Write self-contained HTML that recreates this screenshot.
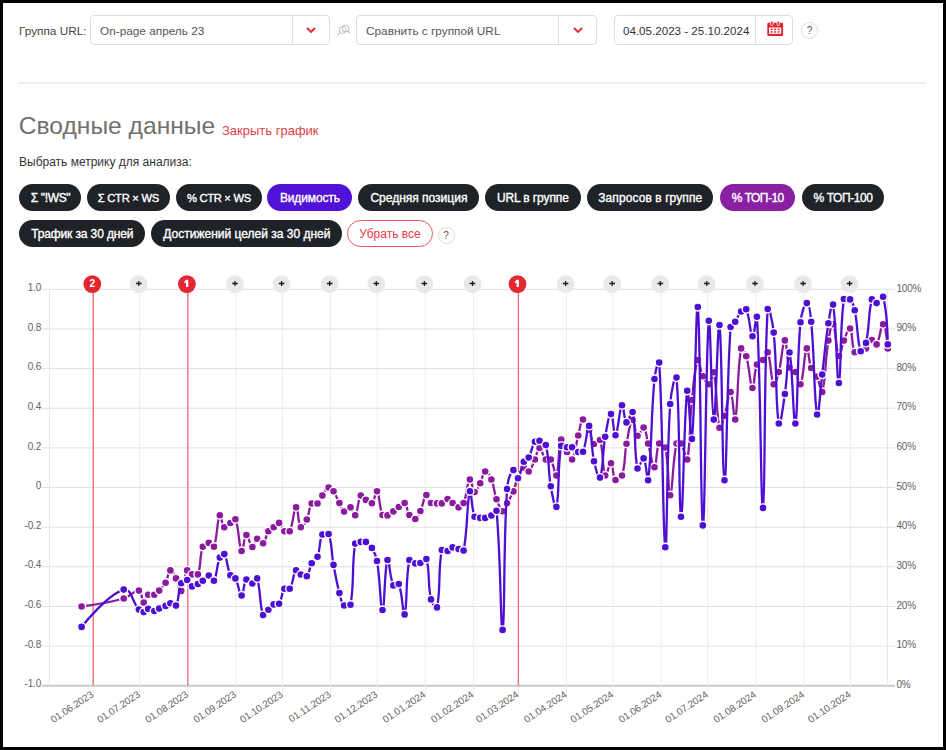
<!DOCTYPE html>
<html><head><meta charset="utf-8">
<style>
html,body{margin:0;padding:0;}
body{width:946px;height:750px;position:relative;overflow:hidden;background:#000;font-family:"Liberation Sans",sans-serif;}
#page{position:absolute;left:3px;top:3px;width:940px;height:744px;background:#fff;}
.abs{position:absolute;white-space:nowrap;}
.sel{position:absolute;top:15px;height:30px;border:1px solid #dcdcdc;border-radius:4px;background:#fff;box-sizing:border-box;}
.sel .div{position:absolute;top:0;bottom:0;width:1px;background:#dcdcdc;}
.sel .txt{position:absolute;top:8px;font-size:11.8px;color:#555;white-space:nowrap;}
.btn{position:absolute;height:27.5px;border-radius:14px;box-sizing:border-box;font-size:12px;font-weight:normal;-webkit-text-stroke:0.35px currentColor;line-height:29px;text-align:center;white-space:nowrap;}
svg text{font-family:"Liberation Sans",sans-serif;}
</style></head><body>
<div id="page"></div>
<div class="abs" style="left:19px;top:24px;font-size:11.8px;color:#444;">Группа URL:</div>
<div class="sel" style="left:90px;width:240px;">
  <div class="txt" style="left:9px;">On-page апрель 23</div>
  <div class="div" style="left:201px;"></div>
  <svg style="position:absolute;left:215px;top:11px" width="10" height="7"><path d="M1,1 L5,5 L9,1" fill="none" stroke="#e3262f" stroke-width="1.8"/></svg>
</div>
<svg style="position:absolute;left:336px;top:22px" width="16" height="16" viewBox="0 0 16 16"><circle cx="6.6" cy="8" r="3.3" fill="none" stroke="#c4c4c4" stroke-width="1.1"/><circle cx="9.6" cy="6.5" r="3.3" fill="none" stroke="#c4c4c4" stroke-width="1.1"/><path d="M4.2,10.5 L1.5,13.3 M12,9 L14,11.3" stroke="#c4c4c4" stroke-width="1.2"/></svg>
<div class="sel" style="left:356px;width:241px;">
  <div class="txt" style="left:9px;">Сравнить с группой URL</div>
  <div class="div" style="left:201px;"></div>
  <svg style="position:absolute;left:216px;top:11px" width="10" height="7"><path d="M1,1 L5,5 L9,1" fill="none" stroke="#e3262f" stroke-width="1.8"/></svg>
</div>
<div class="sel" style="left:614px;width:179px;">
  <div class="txt" style="left:8px;top:7.5px;color:#333;font-size:11.6px;">04.05.2023 - 25.10.2024</div>
  <div class="div" style="left:140px;"></div>
  <svg style="position:absolute;left:152px;top:5px" width="17" height="16" viewBox="0 0 17 16"><rect x="0.3" y="1.8" width="15.8" height="13.2" rx="1.2" fill="#e3262f"/><rect x="2" y="6.5" width="12.2" height="6.3" fill="#fff"/><g fill="#e3262f"><rect x="3.6" y="7.6" width="2" height="1.5"/><rect x="7.1" y="7.6" width="2" height="1.5"/><rect x="10.6" y="7.6" width="2" height="1.5"/><rect x="3.6" y="10.2" width="2" height="1.5"/><rect x="7.1" y="10.2" width="2" height="1.5"/><rect x="10.6" y="10.2" width="2" height="1.5"/></g><rect x="3.6" y="0" width="2.4" height="4.5" rx="1" fill="#e3262f" stroke="#fff" stroke-width="0.8"/><rect x="10" y="0" width="2.4" height="4.5" rx="1" fill="#e3262f" stroke="#fff" stroke-width="0.8"/></svg>
</div>
<div class="abs" style="left:801px;top:22px;width:15px;height:15px;border:1px solid #ddd;border-radius:50%;font-size:10px;line-height:15px;text-align:center;color:#555;">?</div>
<div class="abs" style="left:19px;top:82px;width:907px;height:2px;background:#ededed;"></div>
<div class="abs" style="left:18.8px;top:112.4px;font-size:24.6px;color:#707070;">Сводные данные</div>
<div class="abs" style="left:222px;top:123.4px;font-size:13px;color:#e5404a;">Закрыть график</div>
<div class="abs" style="left:19px;top:155.3px;font-size:12px;color:#333;">Выбрать метрику для анализа:</div>
<div class="btn" style="left:19.2px;top:183.7px;width:62.2px;background:#1f2328;color:#fff;font-size:12px;letter-spacing:-0.35px;text-indent:0.35px;">&Sigma; "!WS"</div>
<div class="btn" style="left:86.6px;top:183.7px;width:83.3px;background:#1f2328;color:#fff;font-size:11.2px;letter-spacing:-0.25px;text-indent:0.25px;">&Sigma; CTR &times; WS</div>
<div class="btn" style="left:175.7px;top:183.7px;width:86.2px;background:#1f2328;color:#fff;font-size:11.2px;letter-spacing:-0.3px;text-indent:0.3px;">% CTR &times; WS</div>
<div class="btn" style="left:267.2px;top:183.7px;width:85.3px;background:#5012d6;color:#fff;font-size:12px;letter-spacing:-0.12px;text-indent:0.12px;">Видимость</div>
<div class="btn" style="left:358.4px;top:183.7px;width:121.0px;background:#1f2328;color:#fff;font-size:12px;letter-spacing:0px;text-indent:0px;">Средняя позиция</div>
<div class="btn" style="left:484.7px;top:183.7px;width:96.2px;background:#1f2328;color:#fff;font-size:12px;letter-spacing:-0.12px;text-indent:0.12px;">URL в группе</div>
<div class="btn" style="left:587.3px;top:183.7px;width:126.0px;background:#1f2328;color:#fff;font-size:12px;letter-spacing:0.08px;text-indent:-0.08px;">Запросов в группе</div>
<div class="btn" style="left:719.6px;top:183.7px;width:75.7px;background:#8a1fa3;color:#fff;font-size:12px;letter-spacing:-0.5px;text-indent:0.5px;">% ТОП-10</div>
<div class="btn" style="left:801.6px;top:183.7px;width:82.4px;background:#1f2328;color:#fff;font-size:12px;letter-spacing:-0.42px;text-indent:0.42px;">% ТОП-100</div>
<div class="btn" style="left:19.2px;top:219.9px;width:126.1px;background:#1f2328;color:#fff;font-size:12px;letter-spacing:-0.12px;text-indent:0.12px;">Трафик за 30 дней</div>
<div class="btn" style="left:151.4px;top:219.9px;width:191.1px;background:#1f2328;color:#fff;font-size:12px;letter-spacing:0px;text-indent:0px;">Достижений целей за 30 дней</div>
<div class="btn" style="left:347px;top:219.9px;width:86px;border:1px solid #e8555e;color:#e5404a;font-weight:normal;font-size:12px;-webkit-text-stroke:0;line-height:27px;background:#fff;">Убрать все</div>
<div class="abs" style="left:437.5px;top:226.5px;width:15px;height:15px;border:1px solid #ddd;border-radius:50%;font-size:10px;line-height:15px;text-align:center;color:#555;">?</div>
<svg style="position:absolute;left:0;top:0" width="946" height="750">
<line x1="42" y1="289.3" x2="895" y2="289.3" stroke="#e0e0e0" stroke-width="1"/>
<line x1="42" y1="328.9" x2="895" y2="328.9" stroke="#e0e0e0" stroke-width="1"/>
<line x1="42" y1="368.6" x2="895" y2="368.6" stroke="#e0e0e0" stroke-width="1"/>
<line x1="42" y1="408.2" x2="895" y2="408.2" stroke="#e0e0e0" stroke-width="1"/>
<line x1="42" y1="447.9" x2="895" y2="447.9" stroke="#e0e0e0" stroke-width="1"/>
<line x1="42" y1="487.5" x2="895" y2="487.5" stroke="#e0e0e0" stroke-width="1"/>
<line x1="42" y1="527.2" x2="895" y2="527.2" stroke="#e0e0e0" stroke-width="1"/>
<line x1="42" y1="566.8" x2="895" y2="566.8" stroke="#e0e0e0" stroke-width="1"/>
<line x1="42" y1="606.5" x2="895" y2="606.5" stroke="#e0e0e0" stroke-width="1"/>
<line x1="42" y1="646.1" x2="895" y2="646.1" stroke="#e0e0e0" stroke-width="1"/>
<line x1="42" y1="685.8" x2="895" y2="685.8" stroke="#c9c9c9" stroke-width="2"/>
<line x1="49.4" y1="289.3" x2="49.4" y2="685.8" stroke="#e6e6e6" stroke-width="1"/>
<line x1="887.5" y1="289.3" x2="887.5" y2="685.8" stroke="#e6e6e6" stroke-width="1"/>
<line x1="93.2" y1="289.3" x2="93.2" y2="696.8" stroke="#ececec" stroke-width="1"/>
<line x1="139.7" y1="289.3" x2="139.7" y2="696.8" stroke="#ececec" stroke-width="1"/>
<line x1="187.8" y1="289.3" x2="187.8" y2="696.8" stroke="#ececec" stroke-width="1"/>
<line x1="235.9" y1="289.3" x2="235.9" y2="696.8" stroke="#ececec" stroke-width="1"/>
<line x1="282.5" y1="289.3" x2="282.5" y2="696.8" stroke="#ececec" stroke-width="1"/>
<line x1="330.6" y1="289.3" x2="330.6" y2="696.8" stroke="#ececec" stroke-width="1"/>
<line x1="377.2" y1="289.3" x2="377.2" y2="696.8" stroke="#ececec" stroke-width="1"/>
<line x1="425.3" y1="289.3" x2="425.3" y2="696.8" stroke="#ececec" stroke-width="1"/>
<line x1="473.4" y1="289.3" x2="473.4" y2="696.8" stroke="#ececec" stroke-width="1"/>
<line x1="518.4" y1="289.3" x2="518.4" y2="696.8" stroke="#ececec" stroke-width="1"/>
<line x1="566.5" y1="289.3" x2="566.5" y2="696.8" stroke="#ececec" stroke-width="1"/>
<line x1="613.1" y1="289.3" x2="613.1" y2="696.8" stroke="#ececec" stroke-width="1"/>
<line x1="661.2" y1="289.3" x2="661.2" y2="696.8" stroke="#ececec" stroke-width="1"/>
<line x1="707.7" y1="289.3" x2="707.7" y2="696.8" stroke="#ececec" stroke-width="1"/>
<line x1="755.9" y1="289.3" x2="755.9" y2="696.8" stroke="#ececec" stroke-width="1"/>
<line x1="804.0" y1="289.3" x2="804.0" y2="696.8" stroke="#ececec" stroke-width="1"/>
<line x1="850.5" y1="289.3" x2="850.5" y2="696.8" stroke="#ececec" stroke-width="1"/>
<text x="41" y="290.9" text-anchor="end" font-size="10" letter-spacing="-0.2" fill="#626262">1.0</text>
<text x="896.5" y="291.5" font-size="10" letter-spacing="-0.2" fill="#626262">100%</text>
<text x="41" y="330.6" text-anchor="end" font-size="10" letter-spacing="-0.2" fill="#626262">0.8</text>
<text x="896.5" y="331.1" font-size="10" letter-spacing="-0.2" fill="#626262">90%</text>
<text x="41" y="370.2" text-anchor="end" font-size="10" letter-spacing="-0.2" fill="#626262">0.6</text>
<text x="896.5" y="370.8" font-size="10" letter-spacing="-0.2" fill="#626262">80%</text>
<text x="41" y="409.9" text-anchor="end" font-size="10" letter-spacing="-0.2" fill="#626262">0.4</text>
<text x="896.5" y="410.4" font-size="10" letter-spacing="-0.2" fill="#626262">70%</text>
<text x="41" y="449.5" text-anchor="end" font-size="10" letter-spacing="-0.2" fill="#626262">0.2</text>
<text x="896.5" y="450.1" font-size="10" letter-spacing="-0.2" fill="#626262">60%</text>
<text x="41" y="489.1" text-anchor="end" font-size="10" letter-spacing="-0.2" fill="#626262">0</text>
<text x="896.5" y="489.7" font-size="10" letter-spacing="-0.2" fill="#626262">50%</text>
<text x="41" y="528.8" text-anchor="end" font-size="10" letter-spacing="-0.2" fill="#626262">-0.2</text>
<text x="896.5" y="529.4" font-size="10" letter-spacing="-0.2" fill="#626262">40%</text>
<text x="41" y="568.4" text-anchor="end" font-size="10" letter-spacing="-0.2" fill="#626262">-0.4</text>
<text x="896.5" y="569.0" font-size="10" letter-spacing="-0.2" fill="#626262">30%</text>
<text x="41" y="608.1" text-anchor="end" font-size="10" letter-spacing="-0.2" fill="#626262">-0.6</text>
<text x="896.5" y="608.7" font-size="10" letter-spacing="-0.2" fill="#626262">20%</text>
<text x="41" y="647.8" text-anchor="end" font-size="10" letter-spacing="-0.2" fill="#626262">-0.8</text>
<text x="896.5" y="648.4" font-size="10" letter-spacing="-0.2" fill="#626262">10%</text>
<text x="41" y="687.4" text-anchor="end" font-size="10" letter-spacing="-0.2" fill="#626262">-1.0</text>
<text x="896.5" y="688.0" font-size="10" letter-spacing="-0.2" fill="#626262">0%</text>
<text transform="translate(94.2,696.3) rotate(-33.5)" text-anchor="end" font-size="10" letter-spacing="-0.12" fill="#626262">01.06.2023</text>
<text transform="translate(140.7,696.3) rotate(-33.5)" text-anchor="end" font-size="10" letter-spacing="-0.12" fill="#626262">01.07.2023</text>
<text transform="translate(188.8,696.3) rotate(-33.5)" text-anchor="end" font-size="10" letter-spacing="-0.12" fill="#626262">01.08.2023</text>
<text transform="translate(236.9,696.3) rotate(-33.5)" text-anchor="end" font-size="10" letter-spacing="-0.12" fill="#626262">01.09.2023</text>
<text transform="translate(283.5,696.3) rotate(-33.5)" text-anchor="end" font-size="10" letter-spacing="-0.12" fill="#626262">01.10.2023</text>
<text transform="translate(331.6,696.3) rotate(-33.5)" text-anchor="end" font-size="10" letter-spacing="-0.12" fill="#626262">01.11.2023</text>
<text transform="translate(378.2,696.3) rotate(-33.5)" text-anchor="end" font-size="10" letter-spacing="-0.12" fill="#626262">01.12.2023</text>
<text transform="translate(426.3,696.3) rotate(-33.5)" text-anchor="end" font-size="10" letter-spacing="-0.12" fill="#626262">01.01.2024</text>
<text transform="translate(474.4,696.3) rotate(-33.5)" text-anchor="end" font-size="10" letter-spacing="-0.12" fill="#626262">01.02.2024</text>
<text transform="translate(519.4,696.3) rotate(-33.5)" text-anchor="end" font-size="10" letter-spacing="-0.12" fill="#626262">01.03.2024</text>
<text transform="translate(567.5,696.3) rotate(-33.5)" text-anchor="end" font-size="10" letter-spacing="-0.12" fill="#626262">01.04.2024</text>
<text transform="translate(614.1,696.3) rotate(-33.5)" text-anchor="end" font-size="10" letter-spacing="-0.12" fill="#626262">01.05.2024</text>
<text transform="translate(662.2,696.3) rotate(-33.5)" text-anchor="end" font-size="10" letter-spacing="-0.12" fill="#626262">01.06.2024</text>
<text transform="translate(708.7,696.3) rotate(-33.5)" text-anchor="end" font-size="10" letter-spacing="-0.12" fill="#626262">01.07.2024</text>
<text transform="translate(756.9,696.3) rotate(-33.5)" text-anchor="end" font-size="10" letter-spacing="-0.12" fill="#626262">01.08.2024</text>
<text transform="translate(805.0,696.3) rotate(-33.5)" text-anchor="end" font-size="10" letter-spacing="-0.12" fill="#626262">01.09.2024</text>
<text transform="translate(851.5,696.3) rotate(-33.5)" text-anchor="end" font-size="10" letter-spacing="-0.12" fill="#626262">01.10.2024</text>
<line x1="93.2" y1="290" x2="93.2" y2="685.8" stroke="#ee6a72" stroke-width="1.3"/>
<line x1="187.8" y1="290" x2="187.8" y2="685.8" stroke="#ee6a72" stroke-width="1.3"/>
<line x1="518.4" y1="290" x2="518.4" y2="685.8" stroke="#ee6a72" stroke-width="1.3"/>
<path d="M81.6,606.5 C81.6,606.5 106.5,603.3 123.7,598.5 C130.6,596.6 134.2,589.6 138.9,590.6 C142.5,591.3 141.4,601.6 143.7,602.6 C145.3,603.3 145.5,596.8 148.2,594.8 C150.0,593.5 152.1,595.7 154.3,594.8 C156.7,593.9 157.4,592.6 159.2,590.6 C162.1,587.5 163.6,586.4 165.6,582.7 C168.3,577.9 167.9,571.4 170.4,570.4 C172.3,569.6 174.1,574.8 176.0,578.4 C178.6,583.4 179.4,592.2 181.2,590.9 C184.1,588.8 183.7,575.8 187.2,570.4 C188.2,568.8 189.7,573.5 192.0,574.4 C194.2,575.2 197.1,576.4 197.9,574.4 C201.6,564.8 199.1,557.3 202.8,546.8 C203.7,544.1 206.3,542.9 208.8,542.9 C211.0,542.9 213.1,548.6 213.9,546.7 C217.7,537.0 216.6,521.0 219.8,515.2 C221.0,512.9 221.5,525.1 224.3,527.2 C225.9,528.4 227.9,524.8 230.4,523.0 C232.5,521.5 234.7,517.4 235.4,519.3 C239.4,529.2 238.6,546.7 241.6,551.0 C243.2,553.2 243.9,535.9 246.4,535.0 C248.4,534.3 249.7,546.1 252.4,547.0 C254.2,547.7 254.6,539.7 257.1,538.8 C259.1,538.1 261.4,544.4 263.1,543.2 C266.1,541.2 265.4,535.7 268.4,531.2 C269.9,528.9 271.5,528.9 273.7,527.2 C276.0,525.4 277.2,522.2 279.1,522.9 C281.7,523.9 281.5,528.9 284.4,531.2 C286.0,532.4 288.8,533.0 289.7,531.2 C293.7,522.9 293.5,508.2 296.1,507.3 C298.2,506.5 297.8,523.7 300.8,527.2 C302.3,528.9 305.1,523.2 306.8,519.5 C309.7,513.2 308.4,508.5 311.7,503.5 C312.9,501.8 315.8,504.8 317.5,503.5 C320.3,501.5 320.2,498.8 322.4,495.6 C324.8,492.1 325.7,488.6 328.6,487.5 C330.4,486.8 332.0,489.2 333.5,491.3 C336.6,495.8 336.8,498.2 339.4,503.1 C341.3,506.7 341.5,510.6 344.1,511.6 C346.2,512.4 348.4,506.6 350.5,507.3 C353.0,508.1 353.9,516.7 355.2,515.2 C358.2,511.8 357.4,500.4 360.8,495.6 C361.9,494.0 363.6,498.3 365.9,499.9 C368.3,501.5 370.3,504.6 371.9,503.3 C375.0,500.9 375.4,489.5 377.0,491.2 C379.9,494.4 378.8,506.6 382.5,515.0 C383.3,516.7 385.6,516.0 387.5,515.4 C390.2,514.5 391.0,513.2 393.4,511.4 C395.7,509.7 396.5,508.8 398.8,507.0 C401.2,505.2 403.0,501.8 404.6,503.0 C407.5,505.2 406.5,510.7 409.4,515.0 C411.0,517.4 413.3,519.7 415.3,519.0 C417.9,518.0 418.7,514.6 420.4,511.0 C423.4,504.5 423.5,497.2 426.4,495.0 C428.0,493.8 428.3,500.9 431.0,503.0 C432.8,504.4 434.5,503.3 437.0,503.4 C439.0,503.5 440.0,504.1 441.8,503.4 C444.5,502.3 445.2,499.1 447.6,499.0 C449.7,498.9 450.5,501.4 452.6,503.0 C455.1,504.9 456.2,507.4 458.6,507.4 C460.8,507.4 462.6,505.6 463.6,503.1 C467.3,493.9 466.9,482.5 469.9,479.5 C471.5,477.9 472.2,491.1 474.6,492.0 C476.6,492.7 478.3,487.1 480.2,483.2 C482.7,478.5 482.6,472.4 485.2,471.5 C487.3,470.8 489.9,475.6 491.4,479.5 C494.6,487.3 493.7,491.2 496.5,499.2 C498.4,504.5 500.0,510.2 502.6,511.2 C504.5,511.9 505.3,506.6 507.1,503.2 C509.8,498.3 511.3,496.6 513.4,491.4 C515.8,485.6 515.5,482.8 518.0,477.0 C519.9,472.7 520.9,469.0 523.8,467.5 C525.4,466.7 527.2,472.6 528.7,471.5 C531.8,469.2 532.5,464.6 534.9,459.5 C537.0,454.8 537.3,448.0 539.5,448.0 C541.9,448.0 542.4,456.0 545.8,459.5 C547.1,460.8 549.7,458.0 550.8,459.5 C554.2,464.7 555.0,478.2 556.4,475.5 C559.4,469.8 558.0,446.7 561.2,439.5 C562.5,436.8 564.3,446.9 567.0,452.0 C568.8,455.3 570.8,461.4 572.1,459.5 C575.5,454.4 575.5,445.5 578.2,435.5 C580.0,428.7 580.3,420.8 583.0,419.5 C584.9,418.5 587.0,425.4 589.1,430.0 C591.7,435.7 591.0,441.2 594.0,444.0 C595.6,445.4 599.3,437.8 600.0,440.0 C603.9,451.0 601.9,468.4 605.2,475.5 C606.5,478.2 609.1,462.4 611.0,463.2 C613.4,464.3 612.3,476.5 615.5,480.0 C617.0,481.6 621.1,478.5 622.0,475.5 C625.8,463.3 624.0,456.9 626.5,443.7 C628.4,433.6 629.8,422.0 632.6,420.0 C634.5,418.6 634.7,433.8 637.5,435.7 C639.3,436.9 642.0,426.2 643.6,427.5 C646.4,429.6 646.3,436.8 648.1,443.6 C650.9,453.5 652.2,467.3 654.5,467.3 C656.8,467.3 655.7,449.9 659.2,443.5 C660.2,441.6 664.7,444.6 665.3,447.5 C669.3,466.3 668.0,496.0 670.2,495.2 C672.6,494.3 672.3,463.5 676.5,443.5 C676.8,441.7 680.1,442.1 681.0,443.5 C684.6,448.8 686.1,463.6 687.2,459.5 C690.7,445.3 689.2,424.9 691.9,400.0 C693.7,383.2 694.6,367.2 697.8,360.2 C699.2,357.3 700.0,369.9 702.8,376.3 C704.6,380.1 706.8,385.0 708.8,384.3 C711.4,383.3 712.9,368.7 713.8,372.2 C717.4,387.0 715.8,412.9 719.5,427.8 C720.3,431.2 722.8,421.1 724.5,415.9 C727.5,406.1 728.5,391.4 730.6,392.1 C733.0,392.9 733.9,424.6 735.2,419.5 C738.3,406.3 737.0,371.9 741.1,348.4 C741.6,345.3 745.2,352.5 746.2,356.2 C750.0,369.1 749.9,386.0 752.5,388.0 C754.4,389.5 753.6,373.4 756.9,364.5 C758.0,361.7 760.9,362.3 763.0,360.0 C765.4,357.2 766.7,350.0 767.7,352.2 C771.2,360.2 770.4,378.4 773.7,384.3 C775.0,386.7 777.4,377.5 778.8,372.1 C782.1,359.0 782.5,341.4 784.9,340.4 C787.0,339.5 786.0,357.0 789.5,367.5 C790.4,370.3 793.7,369.6 795.4,372.1 C798.4,376.6 799.3,387.0 800.5,384.3 C804.1,377.0 803.9,352.8 806.8,348.4 C808.4,346.0 808.3,360.2 811.2,368.0 C812.7,372.1 815.3,372.6 817.1,376.6 C819.9,382.7 821.0,395.6 822.2,392.0 C825.7,380.5 824.9,362.0 828.4,340.6 C829.5,333.5 831.6,322.0 833.1,324.2 C836.0,328.4 835.9,351.4 838.9,356.0 C840.4,358.3 841.3,346.9 843.9,340.6 C846.0,335.3 848.5,326.7 850.1,328.5 C853.0,331.6 851.1,344.5 854.7,352.2 C855.6,354.1 858.3,352.1 860.7,351.3 C863.1,350.5 864.3,350.3 866.0,348.5 C869.0,345.5 869.2,341.1 871.9,340.0 C873.6,339.3 875.5,345.9 876.6,344.4 C880.2,339.3 880.9,323.4 883.1,324.2 C885.6,325.1 887.8,348.5 887.8,348.5" fill="none" stroke="#8a1b9e" stroke-width="2.3" stroke-linejoin="round"/>
<circle cx="81.6" cy="606.5" r="4.0" fill="#8a1b9e" stroke="#fff" stroke-width="1.4"/>
<circle cx="123.7" cy="598.5" r="4.0" fill="#8a1b9e" stroke="#fff" stroke-width="1.4"/>
<circle cx="138.9" cy="590.6" r="4.0" fill="#8a1b9e" stroke="#fff" stroke-width="1.4"/>
<circle cx="143.7" cy="602.6" r="4.0" fill="#8a1b9e" stroke="#fff" stroke-width="1.4"/>
<circle cx="148.2" cy="594.8" r="4.0" fill="#8a1b9e" stroke="#fff" stroke-width="1.4"/>
<circle cx="154.3" cy="594.8" r="4.0" fill="#8a1b9e" stroke="#fff" stroke-width="1.4"/>
<circle cx="159.2" cy="590.6" r="4.0" fill="#8a1b9e" stroke="#fff" stroke-width="1.4"/>
<circle cx="165.6" cy="582.7" r="4.0" fill="#8a1b9e" stroke="#fff" stroke-width="1.4"/>
<circle cx="170.4" cy="570.4" r="4.0" fill="#8a1b9e" stroke="#fff" stroke-width="1.4"/>
<circle cx="176.0" cy="578.4" r="4.0" fill="#8a1b9e" stroke="#fff" stroke-width="1.4"/>
<circle cx="181.2" cy="590.9" r="4.0" fill="#8a1b9e" stroke="#fff" stroke-width="1.4"/>
<circle cx="187.2" cy="570.4" r="4.0" fill="#8a1b9e" stroke="#fff" stroke-width="1.4"/>
<circle cx="192.0" cy="574.4" r="4.0" fill="#8a1b9e" stroke="#fff" stroke-width="1.4"/>
<circle cx="197.9" cy="574.4" r="4.0" fill="#8a1b9e" stroke="#fff" stroke-width="1.4"/>
<circle cx="202.8" cy="546.8" r="4.0" fill="#8a1b9e" stroke="#fff" stroke-width="1.4"/>
<circle cx="208.8" cy="542.9" r="4.0" fill="#8a1b9e" stroke="#fff" stroke-width="1.4"/>
<circle cx="213.9" cy="546.7" r="4.0" fill="#8a1b9e" stroke="#fff" stroke-width="1.4"/>
<circle cx="219.8" cy="515.2" r="4.0" fill="#8a1b9e" stroke="#fff" stroke-width="1.4"/>
<circle cx="224.3" cy="527.2" r="4.0" fill="#8a1b9e" stroke="#fff" stroke-width="1.4"/>
<circle cx="230.4" cy="523.0" r="4.0" fill="#8a1b9e" stroke="#fff" stroke-width="1.4"/>
<circle cx="235.4" cy="519.3" r="4.0" fill="#8a1b9e" stroke="#fff" stroke-width="1.4"/>
<circle cx="241.6" cy="551.0" r="4.0" fill="#8a1b9e" stroke="#fff" stroke-width="1.4"/>
<circle cx="246.4" cy="535.0" r="4.0" fill="#8a1b9e" stroke="#fff" stroke-width="1.4"/>
<circle cx="252.4" cy="547.0" r="4.0" fill="#8a1b9e" stroke="#fff" stroke-width="1.4"/>
<circle cx="257.1" cy="538.8" r="4.0" fill="#8a1b9e" stroke="#fff" stroke-width="1.4"/>
<circle cx="263.1" cy="543.2" r="4.0" fill="#8a1b9e" stroke="#fff" stroke-width="1.4"/>
<circle cx="268.4" cy="531.2" r="4.0" fill="#8a1b9e" stroke="#fff" stroke-width="1.4"/>
<circle cx="273.7" cy="527.2" r="4.0" fill="#8a1b9e" stroke="#fff" stroke-width="1.4"/>
<circle cx="279.1" cy="522.9" r="4.0" fill="#8a1b9e" stroke="#fff" stroke-width="1.4"/>
<circle cx="284.4" cy="531.2" r="4.0" fill="#8a1b9e" stroke="#fff" stroke-width="1.4"/>
<circle cx="289.7" cy="531.2" r="4.0" fill="#8a1b9e" stroke="#fff" stroke-width="1.4"/>
<circle cx="296.1" cy="507.3" r="4.0" fill="#8a1b9e" stroke="#fff" stroke-width="1.4"/>
<circle cx="300.8" cy="527.2" r="4.0" fill="#8a1b9e" stroke="#fff" stroke-width="1.4"/>
<circle cx="306.8" cy="519.5" r="4.0" fill="#8a1b9e" stroke="#fff" stroke-width="1.4"/>
<circle cx="311.7" cy="503.5" r="4.0" fill="#8a1b9e" stroke="#fff" stroke-width="1.4"/>
<circle cx="317.5" cy="503.5" r="4.0" fill="#8a1b9e" stroke="#fff" stroke-width="1.4"/>
<circle cx="322.4" cy="495.6" r="4.0" fill="#8a1b9e" stroke="#fff" stroke-width="1.4"/>
<circle cx="328.6" cy="487.5" r="4.0" fill="#8a1b9e" stroke="#fff" stroke-width="1.4"/>
<circle cx="333.5" cy="491.3" r="4.0" fill="#8a1b9e" stroke="#fff" stroke-width="1.4"/>
<circle cx="339.4" cy="503.1" r="4.0" fill="#8a1b9e" stroke="#fff" stroke-width="1.4"/>
<circle cx="344.1" cy="511.6" r="4.0" fill="#8a1b9e" stroke="#fff" stroke-width="1.4"/>
<circle cx="350.5" cy="507.3" r="4.0" fill="#8a1b9e" stroke="#fff" stroke-width="1.4"/>
<circle cx="355.2" cy="515.2" r="4.0" fill="#8a1b9e" stroke="#fff" stroke-width="1.4"/>
<circle cx="360.8" cy="495.6" r="4.0" fill="#8a1b9e" stroke="#fff" stroke-width="1.4"/>
<circle cx="365.9" cy="499.9" r="4.0" fill="#8a1b9e" stroke="#fff" stroke-width="1.4"/>
<circle cx="371.9" cy="503.3" r="4.0" fill="#8a1b9e" stroke="#fff" stroke-width="1.4"/>
<circle cx="377.0" cy="491.2" r="4.0" fill="#8a1b9e" stroke="#fff" stroke-width="1.4"/>
<circle cx="382.5" cy="515.0" r="4.0" fill="#8a1b9e" stroke="#fff" stroke-width="1.4"/>
<circle cx="387.5" cy="515.4" r="4.0" fill="#8a1b9e" stroke="#fff" stroke-width="1.4"/>
<circle cx="393.4" cy="511.4" r="4.0" fill="#8a1b9e" stroke="#fff" stroke-width="1.4"/>
<circle cx="398.8" cy="507.0" r="4.0" fill="#8a1b9e" stroke="#fff" stroke-width="1.4"/>
<circle cx="404.6" cy="503.0" r="4.0" fill="#8a1b9e" stroke="#fff" stroke-width="1.4"/>
<circle cx="409.4" cy="515.0" r="4.0" fill="#8a1b9e" stroke="#fff" stroke-width="1.4"/>
<circle cx="415.3" cy="519.0" r="4.0" fill="#8a1b9e" stroke="#fff" stroke-width="1.4"/>
<circle cx="420.4" cy="511.0" r="4.0" fill="#8a1b9e" stroke="#fff" stroke-width="1.4"/>
<circle cx="426.4" cy="495.0" r="4.0" fill="#8a1b9e" stroke="#fff" stroke-width="1.4"/>
<circle cx="431.0" cy="503.0" r="4.0" fill="#8a1b9e" stroke="#fff" stroke-width="1.4"/>
<circle cx="437.0" cy="503.4" r="4.0" fill="#8a1b9e" stroke="#fff" stroke-width="1.4"/>
<circle cx="441.8" cy="503.4" r="4.0" fill="#8a1b9e" stroke="#fff" stroke-width="1.4"/>
<circle cx="447.6" cy="499.0" r="4.0" fill="#8a1b9e" stroke="#fff" stroke-width="1.4"/>
<circle cx="452.6" cy="503.0" r="4.0" fill="#8a1b9e" stroke="#fff" stroke-width="1.4"/>
<circle cx="458.6" cy="507.4" r="4.0" fill="#8a1b9e" stroke="#fff" stroke-width="1.4"/>
<circle cx="463.6" cy="503.1" r="4.0" fill="#8a1b9e" stroke="#fff" stroke-width="1.4"/>
<circle cx="469.9" cy="479.5" r="4.0" fill="#8a1b9e" stroke="#fff" stroke-width="1.4"/>
<circle cx="474.6" cy="492.0" r="4.0" fill="#8a1b9e" stroke="#fff" stroke-width="1.4"/>
<circle cx="480.2" cy="483.2" r="4.0" fill="#8a1b9e" stroke="#fff" stroke-width="1.4"/>
<circle cx="485.2" cy="471.5" r="4.0" fill="#8a1b9e" stroke="#fff" stroke-width="1.4"/>
<circle cx="491.4" cy="479.5" r="4.0" fill="#8a1b9e" stroke="#fff" stroke-width="1.4"/>
<circle cx="496.5" cy="499.2" r="4.0" fill="#8a1b9e" stroke="#fff" stroke-width="1.4"/>
<circle cx="502.6" cy="511.2" r="4.0" fill="#8a1b9e" stroke="#fff" stroke-width="1.4"/>
<circle cx="507.1" cy="503.2" r="4.0" fill="#8a1b9e" stroke="#fff" stroke-width="1.4"/>
<circle cx="513.4" cy="491.4" r="4.0" fill="#8a1b9e" stroke="#fff" stroke-width="1.4"/>
<circle cx="518.0" cy="477.0" r="4.0" fill="#8a1b9e" stroke="#fff" stroke-width="1.4"/>
<circle cx="523.8" cy="467.5" r="4.0" fill="#8a1b9e" stroke="#fff" stroke-width="1.4"/>
<circle cx="528.7" cy="471.5" r="4.0" fill="#8a1b9e" stroke="#fff" stroke-width="1.4"/>
<circle cx="534.9" cy="459.5" r="4.0" fill="#8a1b9e" stroke="#fff" stroke-width="1.4"/>
<circle cx="539.5" cy="448.0" r="4.0" fill="#8a1b9e" stroke="#fff" stroke-width="1.4"/>
<circle cx="545.8" cy="459.5" r="4.0" fill="#8a1b9e" stroke="#fff" stroke-width="1.4"/>
<circle cx="550.8" cy="459.5" r="4.0" fill="#8a1b9e" stroke="#fff" stroke-width="1.4"/>
<circle cx="556.4" cy="475.5" r="4.0" fill="#8a1b9e" stroke="#fff" stroke-width="1.4"/>
<circle cx="561.2" cy="439.5" r="4.0" fill="#8a1b9e" stroke="#fff" stroke-width="1.4"/>
<circle cx="567.0" cy="452.0" r="4.0" fill="#8a1b9e" stroke="#fff" stroke-width="1.4"/>
<circle cx="572.1" cy="459.5" r="4.0" fill="#8a1b9e" stroke="#fff" stroke-width="1.4"/>
<circle cx="578.2" cy="435.5" r="4.0" fill="#8a1b9e" stroke="#fff" stroke-width="1.4"/>
<circle cx="583.0" cy="419.5" r="4.0" fill="#8a1b9e" stroke="#fff" stroke-width="1.4"/>
<circle cx="589.1" cy="430.0" r="4.0" fill="#8a1b9e" stroke="#fff" stroke-width="1.4"/>
<circle cx="594.0" cy="444.0" r="4.0" fill="#8a1b9e" stroke="#fff" stroke-width="1.4"/>
<circle cx="600.0" cy="440.0" r="4.0" fill="#8a1b9e" stroke="#fff" stroke-width="1.4"/>
<circle cx="605.2" cy="475.5" r="4.0" fill="#8a1b9e" stroke="#fff" stroke-width="1.4"/>
<circle cx="611.0" cy="463.2" r="4.0" fill="#8a1b9e" stroke="#fff" stroke-width="1.4"/>
<circle cx="615.5" cy="480.0" r="4.0" fill="#8a1b9e" stroke="#fff" stroke-width="1.4"/>
<circle cx="622.0" cy="475.5" r="4.0" fill="#8a1b9e" stroke="#fff" stroke-width="1.4"/>
<circle cx="626.5" cy="443.7" r="4.0" fill="#8a1b9e" stroke="#fff" stroke-width="1.4"/>
<circle cx="632.6" cy="420.0" r="4.0" fill="#8a1b9e" stroke="#fff" stroke-width="1.4"/>
<circle cx="637.5" cy="435.7" r="4.0" fill="#8a1b9e" stroke="#fff" stroke-width="1.4"/>
<circle cx="643.6" cy="427.5" r="4.0" fill="#8a1b9e" stroke="#fff" stroke-width="1.4"/>
<circle cx="648.1" cy="443.6" r="4.0" fill="#8a1b9e" stroke="#fff" stroke-width="1.4"/>
<circle cx="654.5" cy="467.3" r="4.0" fill="#8a1b9e" stroke="#fff" stroke-width="1.4"/>
<circle cx="659.2" cy="443.5" r="4.0" fill="#8a1b9e" stroke="#fff" stroke-width="1.4"/>
<circle cx="665.3" cy="447.5" r="4.0" fill="#8a1b9e" stroke="#fff" stroke-width="1.4"/>
<circle cx="670.2" cy="495.2" r="4.0" fill="#8a1b9e" stroke="#fff" stroke-width="1.4"/>
<circle cx="676.5" cy="443.5" r="4.0" fill="#8a1b9e" stroke="#fff" stroke-width="1.4"/>
<circle cx="681.0" cy="443.5" r="4.0" fill="#8a1b9e" stroke="#fff" stroke-width="1.4"/>
<circle cx="687.2" cy="459.5" r="4.0" fill="#8a1b9e" stroke="#fff" stroke-width="1.4"/>
<circle cx="691.9" cy="400.0" r="4.0" fill="#8a1b9e" stroke="#fff" stroke-width="1.4"/>
<circle cx="697.8" cy="360.2" r="4.0" fill="#8a1b9e" stroke="#fff" stroke-width="1.4"/>
<circle cx="702.8" cy="376.3" r="4.0" fill="#8a1b9e" stroke="#fff" stroke-width="1.4"/>
<circle cx="708.8" cy="384.3" r="4.0" fill="#8a1b9e" stroke="#fff" stroke-width="1.4"/>
<circle cx="713.8" cy="372.2" r="4.0" fill="#8a1b9e" stroke="#fff" stroke-width="1.4"/>
<circle cx="719.5" cy="427.8" r="4.0" fill="#8a1b9e" stroke="#fff" stroke-width="1.4"/>
<circle cx="724.5" cy="415.9" r="4.0" fill="#8a1b9e" stroke="#fff" stroke-width="1.4"/>
<circle cx="730.6" cy="392.1" r="4.0" fill="#8a1b9e" stroke="#fff" stroke-width="1.4"/>
<circle cx="735.2" cy="419.5" r="4.0" fill="#8a1b9e" stroke="#fff" stroke-width="1.4"/>
<circle cx="741.1" cy="348.4" r="4.0" fill="#8a1b9e" stroke="#fff" stroke-width="1.4"/>
<circle cx="746.2" cy="356.2" r="4.0" fill="#8a1b9e" stroke="#fff" stroke-width="1.4"/>
<circle cx="752.5" cy="388.0" r="4.0" fill="#8a1b9e" stroke="#fff" stroke-width="1.4"/>
<circle cx="756.9" cy="364.5" r="4.0" fill="#8a1b9e" stroke="#fff" stroke-width="1.4"/>
<circle cx="763.0" cy="360.0" r="4.0" fill="#8a1b9e" stroke="#fff" stroke-width="1.4"/>
<circle cx="767.7" cy="352.2" r="4.0" fill="#8a1b9e" stroke="#fff" stroke-width="1.4"/>
<circle cx="773.7" cy="384.3" r="4.0" fill="#8a1b9e" stroke="#fff" stroke-width="1.4"/>
<circle cx="778.8" cy="372.1" r="4.0" fill="#8a1b9e" stroke="#fff" stroke-width="1.4"/>
<circle cx="784.9" cy="340.4" r="4.0" fill="#8a1b9e" stroke="#fff" stroke-width="1.4"/>
<circle cx="789.5" cy="367.5" r="4.0" fill="#8a1b9e" stroke="#fff" stroke-width="1.4"/>
<circle cx="795.4" cy="372.1" r="4.0" fill="#8a1b9e" stroke="#fff" stroke-width="1.4"/>
<circle cx="800.5" cy="384.3" r="4.0" fill="#8a1b9e" stroke="#fff" stroke-width="1.4"/>
<circle cx="806.8" cy="348.4" r="4.0" fill="#8a1b9e" stroke="#fff" stroke-width="1.4"/>
<circle cx="811.2" cy="368.0" r="4.0" fill="#8a1b9e" stroke="#fff" stroke-width="1.4"/>
<circle cx="817.1" cy="376.6" r="4.0" fill="#8a1b9e" stroke="#fff" stroke-width="1.4"/>
<circle cx="822.2" cy="392.0" r="4.0" fill="#8a1b9e" stroke="#fff" stroke-width="1.4"/>
<circle cx="828.4" cy="340.6" r="4.0" fill="#8a1b9e" stroke="#fff" stroke-width="1.4"/>
<circle cx="833.1" cy="324.2" r="4.0" fill="#8a1b9e" stroke="#fff" stroke-width="1.4"/>
<circle cx="838.9" cy="356.0" r="4.0" fill="#8a1b9e" stroke="#fff" stroke-width="1.4"/>
<circle cx="843.9" cy="340.6" r="4.0" fill="#8a1b9e" stroke="#fff" stroke-width="1.4"/>
<circle cx="850.1" cy="328.5" r="4.0" fill="#8a1b9e" stroke="#fff" stroke-width="1.4"/>
<circle cx="854.7" cy="352.2" r="4.0" fill="#8a1b9e" stroke="#fff" stroke-width="1.4"/>
<circle cx="860.7" cy="351.3" r="4.0" fill="#8a1b9e" stroke="#fff" stroke-width="1.4"/>
<circle cx="866.0" cy="348.5" r="4.0" fill="#8a1b9e" stroke="#fff" stroke-width="1.4"/>
<circle cx="871.9" cy="340.0" r="4.0" fill="#8a1b9e" stroke="#fff" stroke-width="1.4"/>
<circle cx="876.6" cy="344.4" r="4.0" fill="#8a1b9e" stroke="#fff" stroke-width="1.4"/>
<circle cx="883.1" cy="324.2" r="4.0" fill="#8a1b9e" stroke="#fff" stroke-width="1.4"/>
<circle cx="887.8" cy="348.5" r="4.0" fill="#8a1b9e" stroke="#fff" stroke-width="1.4"/>
<path d="M81.6,626.9 C81.6,626.9 107.1,594.6 123.7,589.6 C131.1,587.4 132.0,601.8 138.9,609.6 C140.4,611.3 141.8,612.2 143.7,612.1 C145.6,611.9 146.1,609.1 148.2,608.9 C150.6,608.7 151.8,611.1 154.3,611.0 C156.4,610.9 157.1,609.5 159.2,608.6 C161.9,607.4 163.0,607.2 165.6,605.9 C167.7,604.9 168.3,603.3 170.4,603.2 C172.7,603.1 175.0,607.4 176.0,605.6 C179.6,599.0 177.6,591.5 181.2,583.2 C182.3,580.7 185.1,579.4 187.2,580.0 C189.7,580.7 189.5,585.5 192.0,586.4 C194.0,587.1 195.5,585.2 197.9,584.0 C200.1,582.9 200.8,582.3 202.8,580.8 C205.4,578.7 206.4,575.5 208.8,575.5 C211.0,575.5 212.8,582.6 213.9,580.8 C217.4,575.0 216.2,566.6 219.8,557.6 C220.6,555.4 223.4,552.6 224.3,554.1 C227.8,560.0 226.7,567.2 230.4,575.2 C231.4,577.4 234.3,576.3 235.4,578.4 C239.0,584.8 239.2,595.3 241.6,595.5 C243.8,595.7 243.2,583.0 246.4,579.5 C247.8,578.0 250.1,583.7 252.4,583.5 C254.6,583.3 256.4,576.3 257.1,578.4 C260.9,589.6 259.2,604.2 263.1,615.1 C263.9,617.3 266.2,612.0 268.4,609.7 C270.6,607.5 271.1,605.8 273.7,604.4 C275.6,603.4 278.0,605.5 279.1,603.8 C282.4,598.9 281.1,593.5 284.4,588.8 C285.5,587.2 288.7,590.5 289.7,588.8 C293.6,582.7 292.6,574.8 296.1,570.3 C297.2,568.8 298.5,573.3 300.8,574.5 C303.0,575.7 305.4,577.7 306.8,576.2 C310.0,572.9 308.9,568.2 311.7,563.2 C313.4,560.1 316.3,560.1 317.5,556.8 C320.8,548.1 318.7,542.1 322.4,534.6 C323.4,532.5 327.8,531.9 328.6,534.0 C332.5,544.6 331.1,552.0 333.5,564.9 C335.7,576.8 336.4,581.4 339.4,593.1 C340.8,598.5 341.0,602.2 344.1,605.5 C345.6,607.1 350.1,607.3 350.5,604.8 C354.7,581.3 351.3,567.7 355.2,543.6 C355.6,541.3 358.4,542.3 360.8,541.9 C362.9,541.6 364.1,541.0 365.9,541.9 C368.8,543.5 370.1,544.9 371.9,547.9 C374.8,552.9 376.0,555.2 377.0,561.0 C380.5,581.3 380.3,610.2 382.5,610.0 C384.7,609.8 384.5,566.8 387.5,560.0 C389.1,556.5 389.5,577.1 393.4,585.4 C394.2,587.2 398.1,582.1 398.8,584.0 C402.8,594.3 403.0,618.0 404.6,614.4 C407.4,608.0 405.4,579.0 409.4,560.0 C409.9,557.6 412.7,562.7 415.3,563.4 C417.3,563.9 418.5,563.8 420.4,563.0 C423.1,561.9 425.7,556.7 426.4,559.0 C430.2,572.0 427.4,583.1 431.0,599.4 C431.9,603.4 436.3,610.5 437.0,607.4 C440.9,589.7 437.8,571.5 441.8,550.0 C442.2,547.8 445.4,551.5 447.6,551.0 C449.9,550.4 450.3,547.8 452.6,547.4 C454.9,547.0 456.1,548.3 458.6,549.0 C460.7,549.6 463.2,552.6 463.6,550.6 C468.0,528.3 466.7,501.1 469.9,491.2 C471.3,486.9 471.1,507.6 474.6,516.8 C475.4,518.8 477.9,517.7 480.2,517.9 C482.3,518.1 483.2,518.3 485.2,517.9 C487.9,517.3 489.1,517.0 491.4,515.5 C493.9,514.0 496.2,508.1 496.5,510.7 C500.9,556.1 500.6,634.1 502.6,629.9 C505.1,625.0 503.1,547.8 507.1,489.0 C507.7,480.7 510.3,473.2 513.4,470.1 C514.9,468.7 516.5,479.4 518.0,478.2 C520.9,475.9 520.5,468.1 523.8,461.7 C525.0,459.4 527.4,459.8 528.7,457.5 C532.0,451.4 531.3,447.2 534.9,441.7 C535.8,440.2 537.7,440.2 539.5,440.7 C542.3,441.6 545.1,442.1 545.8,445.1 C549.8,461.2 547.8,469.1 550.8,486.2 C552.3,495.1 555.3,511.3 556.4,506.9 C559.7,494.4 557.2,468.8 561.2,445.9 C561.6,443.7 564.6,446.9 567.0,447.2 C569.1,447.5 570.2,446.4 572.1,447.2 C574.9,448.4 575.4,450.8 578.2,452.0 C580.0,452.7 582.3,453.4 583.0,451.7 C586.9,442.4 587.1,424.2 589.1,425.9 C591.8,428.2 591.0,446.7 594.0,461.3 C595.6,468.4 598.7,480.7 600.0,477.6 C603.3,470.4 602.3,453.8 605.2,436.8 C606.9,427.1 608.7,414.4 611.0,414.1 C613.1,413.8 613.6,436.7 615.5,435.2 C618.2,433.0 619.1,408.7 622.0,405.3 C623.7,403.3 623.9,420.7 626.5,422.4 C628.3,423.5 631.8,408.6 632.6,412.0 C636.4,428.0 633.7,452.4 637.5,468.5 C638.3,471.9 642.1,456.7 643.6,458.4 C646.6,461.6 647.3,486.3 648.1,480.3 C651.9,453.0 650.6,421.3 654.5,379.0 C655.2,371.9 658.8,356.6 659.2,362.6 C663.3,427.3 662.7,537.5 665.3,547.3 C667.3,554.9 666.3,463.9 670.2,404.0 C670.9,392.7 675.7,369.9 676.5,377.6 C680.3,417.2 678.7,513.8 681.0,516.7 C683.2,519.3 683.9,414.4 687.2,390.8 C688.4,381.7 690.7,448.3 691.9,438.9 C695.2,413.1 696.1,293.3 697.8,307.0 C700.7,329.6 700.5,522.4 702.8,525.4 C705.1,528.2 705.7,350.8 708.8,320.8 C710.3,306.3 711.5,418.7 713.8,419.6 C715.9,420.5 717.7,315.4 719.5,325.1 C722.2,340.9 722.1,479.9 724.5,480.3 C726.8,480.7 726.4,390.7 730.6,327.0 C730.8,324.1 733.5,324.1 735.2,321.7 C737.9,317.6 737.9,315.1 741.1,311.5 C742.6,309.8 745.4,307.4 746.2,309.2 C750.2,317.9 749.9,334.5 752.5,336.3 C754.4,337.6 756.5,309.9 756.9,316.7 C760.9,381.9 760.7,509.5 763.0,507.9 C765.3,506.3 763.7,374.6 767.7,309.0 C768.2,301.0 772.7,322.5 773.7,332.6 C777.4,370.5 775.3,404.1 778.8,423.5 C780.0,429.9 783.0,406.5 784.9,394.0 C787.5,376.7 787.9,347.9 789.5,352.5 C792.3,360.3 793.5,428.7 795.4,423.5 C798.1,416.1 796.6,364.5 800.5,322.3 C801.3,313.9 804.5,303.2 806.8,303.1 C809.0,303.0 810.5,313.7 811.2,321.7 C814.8,360.5 813.9,399.0 817.1,414.5 C818.5,421.2 820.1,391.4 822.2,374.6 C824.8,353.1 825.1,344.7 828.4,323.3 C829.6,315.3 832.2,299.7 833.1,304.6 C836.6,324.7 836.7,384.1 838.9,383.0 C841.2,381.8 839.5,331.7 843.9,299.0 C844.2,296.6 848.5,297.8 850.1,299.4 C853.1,302.5 853.7,305.4 854.7,310.2 C858.2,327.2 856.9,340.2 860.7,351.3 C861.6,354.0 865.2,346.9 866.0,342.9 C869.9,325.1 868.0,314.1 871.9,299.4 C872.4,297.4 874.7,303.5 876.6,303.1 C879.4,302.4 882.4,294.0 883.1,296.8 C887.1,311.4 887.8,344.4 887.8,344.4" fill="none" stroke="#4d0fd3" stroke-width="2.3" stroke-linejoin="round"/>
<circle cx="81.6" cy="626.9" r="4.0" fill="#4d0fd3" stroke="#fff" stroke-width="1.4"/>
<circle cx="123.7" cy="589.6" r="4.0" fill="#4d0fd3" stroke="#fff" stroke-width="1.4"/>
<circle cx="138.9" cy="609.6" r="4.0" fill="#4d0fd3" stroke="#fff" stroke-width="1.4"/>
<circle cx="143.7" cy="612.1" r="4.0" fill="#4d0fd3" stroke="#fff" stroke-width="1.4"/>
<circle cx="148.2" cy="608.9" r="4.0" fill="#4d0fd3" stroke="#fff" stroke-width="1.4"/>
<circle cx="154.3" cy="611.0" r="4.0" fill="#4d0fd3" stroke="#fff" stroke-width="1.4"/>
<circle cx="159.2" cy="608.6" r="4.0" fill="#4d0fd3" stroke="#fff" stroke-width="1.4"/>
<circle cx="165.6" cy="605.9" r="4.0" fill="#4d0fd3" stroke="#fff" stroke-width="1.4"/>
<circle cx="170.4" cy="603.2" r="4.0" fill="#4d0fd3" stroke="#fff" stroke-width="1.4"/>
<circle cx="176.0" cy="605.6" r="4.0" fill="#4d0fd3" stroke="#fff" stroke-width="1.4"/>
<circle cx="181.2" cy="583.2" r="4.0" fill="#4d0fd3" stroke="#fff" stroke-width="1.4"/>
<circle cx="187.2" cy="580.0" r="4.0" fill="#4d0fd3" stroke="#fff" stroke-width="1.4"/>
<circle cx="192.0" cy="586.4" r="4.0" fill="#4d0fd3" stroke="#fff" stroke-width="1.4"/>
<circle cx="197.9" cy="584.0" r="4.0" fill="#4d0fd3" stroke="#fff" stroke-width="1.4"/>
<circle cx="202.8" cy="580.8" r="4.0" fill="#4d0fd3" stroke="#fff" stroke-width="1.4"/>
<circle cx="208.8" cy="575.5" r="4.0" fill="#4d0fd3" stroke="#fff" stroke-width="1.4"/>
<circle cx="213.9" cy="580.8" r="4.0" fill="#4d0fd3" stroke="#fff" stroke-width="1.4"/>
<circle cx="219.8" cy="557.6" r="4.0" fill="#4d0fd3" stroke="#fff" stroke-width="1.4"/>
<circle cx="224.3" cy="554.1" r="4.0" fill="#4d0fd3" stroke="#fff" stroke-width="1.4"/>
<circle cx="230.4" cy="575.2" r="4.0" fill="#4d0fd3" stroke="#fff" stroke-width="1.4"/>
<circle cx="235.4" cy="578.4" r="4.0" fill="#4d0fd3" stroke="#fff" stroke-width="1.4"/>
<circle cx="241.6" cy="595.5" r="4.0" fill="#4d0fd3" stroke="#fff" stroke-width="1.4"/>
<circle cx="246.4" cy="579.5" r="4.0" fill="#4d0fd3" stroke="#fff" stroke-width="1.4"/>
<circle cx="252.4" cy="583.5" r="4.0" fill="#4d0fd3" stroke="#fff" stroke-width="1.4"/>
<circle cx="257.1" cy="578.4" r="4.0" fill="#4d0fd3" stroke="#fff" stroke-width="1.4"/>
<circle cx="263.1" cy="615.1" r="4.0" fill="#4d0fd3" stroke="#fff" stroke-width="1.4"/>
<circle cx="268.4" cy="609.7" r="4.0" fill="#4d0fd3" stroke="#fff" stroke-width="1.4"/>
<circle cx="273.7" cy="604.4" r="4.0" fill="#4d0fd3" stroke="#fff" stroke-width="1.4"/>
<circle cx="279.1" cy="603.8" r="4.0" fill="#4d0fd3" stroke="#fff" stroke-width="1.4"/>
<circle cx="284.4" cy="588.8" r="4.0" fill="#4d0fd3" stroke="#fff" stroke-width="1.4"/>
<circle cx="289.7" cy="588.8" r="4.0" fill="#4d0fd3" stroke="#fff" stroke-width="1.4"/>
<circle cx="296.1" cy="570.3" r="4.0" fill="#4d0fd3" stroke="#fff" stroke-width="1.4"/>
<circle cx="300.8" cy="574.5" r="4.0" fill="#4d0fd3" stroke="#fff" stroke-width="1.4"/>
<circle cx="306.8" cy="576.2" r="4.0" fill="#4d0fd3" stroke="#fff" stroke-width="1.4"/>
<circle cx="311.7" cy="563.2" r="4.0" fill="#4d0fd3" stroke="#fff" stroke-width="1.4"/>
<circle cx="317.5" cy="556.8" r="4.0" fill="#4d0fd3" stroke="#fff" stroke-width="1.4"/>
<circle cx="322.4" cy="534.6" r="4.0" fill="#4d0fd3" stroke="#fff" stroke-width="1.4"/>
<circle cx="328.6" cy="534.0" r="4.0" fill="#4d0fd3" stroke="#fff" stroke-width="1.4"/>
<circle cx="333.5" cy="564.9" r="4.0" fill="#4d0fd3" stroke="#fff" stroke-width="1.4"/>
<circle cx="339.4" cy="593.1" r="4.0" fill="#4d0fd3" stroke="#fff" stroke-width="1.4"/>
<circle cx="344.1" cy="605.5" r="4.0" fill="#4d0fd3" stroke="#fff" stroke-width="1.4"/>
<circle cx="350.5" cy="604.8" r="4.0" fill="#4d0fd3" stroke="#fff" stroke-width="1.4"/>
<circle cx="355.2" cy="543.6" r="4.0" fill="#4d0fd3" stroke="#fff" stroke-width="1.4"/>
<circle cx="360.8" cy="541.9" r="4.0" fill="#4d0fd3" stroke="#fff" stroke-width="1.4"/>
<circle cx="365.9" cy="541.9" r="4.0" fill="#4d0fd3" stroke="#fff" stroke-width="1.4"/>
<circle cx="371.9" cy="547.9" r="4.0" fill="#4d0fd3" stroke="#fff" stroke-width="1.4"/>
<circle cx="377.0" cy="561.0" r="4.0" fill="#4d0fd3" stroke="#fff" stroke-width="1.4"/>
<circle cx="382.5" cy="610.0" r="4.0" fill="#4d0fd3" stroke="#fff" stroke-width="1.4"/>
<circle cx="387.5" cy="560.0" r="4.0" fill="#4d0fd3" stroke="#fff" stroke-width="1.4"/>
<circle cx="393.4" cy="585.4" r="4.0" fill="#4d0fd3" stroke="#fff" stroke-width="1.4"/>
<circle cx="398.8" cy="584.0" r="4.0" fill="#4d0fd3" stroke="#fff" stroke-width="1.4"/>
<circle cx="404.6" cy="614.4" r="4.0" fill="#4d0fd3" stroke="#fff" stroke-width="1.4"/>
<circle cx="409.4" cy="560.0" r="4.0" fill="#4d0fd3" stroke="#fff" stroke-width="1.4"/>
<circle cx="415.3" cy="563.4" r="4.0" fill="#4d0fd3" stroke="#fff" stroke-width="1.4"/>
<circle cx="420.4" cy="563.0" r="4.0" fill="#4d0fd3" stroke="#fff" stroke-width="1.4"/>
<circle cx="426.4" cy="559.0" r="4.0" fill="#4d0fd3" stroke="#fff" stroke-width="1.4"/>
<circle cx="431.0" cy="599.4" r="4.0" fill="#4d0fd3" stroke="#fff" stroke-width="1.4"/>
<circle cx="437.0" cy="607.4" r="4.0" fill="#4d0fd3" stroke="#fff" stroke-width="1.4"/>
<circle cx="441.8" cy="550.0" r="4.0" fill="#4d0fd3" stroke="#fff" stroke-width="1.4"/>
<circle cx="447.6" cy="551.0" r="4.0" fill="#4d0fd3" stroke="#fff" stroke-width="1.4"/>
<circle cx="452.6" cy="547.4" r="4.0" fill="#4d0fd3" stroke="#fff" stroke-width="1.4"/>
<circle cx="458.6" cy="549.0" r="4.0" fill="#4d0fd3" stroke="#fff" stroke-width="1.4"/>
<circle cx="463.6" cy="550.6" r="4.0" fill="#4d0fd3" stroke="#fff" stroke-width="1.4"/>
<circle cx="469.9" cy="491.2" r="4.0" fill="#4d0fd3" stroke="#fff" stroke-width="1.4"/>
<circle cx="474.6" cy="516.8" r="4.0" fill="#4d0fd3" stroke="#fff" stroke-width="1.4"/>
<circle cx="480.2" cy="517.9" r="4.0" fill="#4d0fd3" stroke="#fff" stroke-width="1.4"/>
<circle cx="485.2" cy="517.9" r="4.0" fill="#4d0fd3" stroke="#fff" stroke-width="1.4"/>
<circle cx="491.4" cy="515.5" r="4.0" fill="#4d0fd3" stroke="#fff" stroke-width="1.4"/>
<circle cx="496.5" cy="510.7" r="4.0" fill="#4d0fd3" stroke="#fff" stroke-width="1.4"/>
<circle cx="502.6" cy="629.9" r="4.0" fill="#4d0fd3" stroke="#fff" stroke-width="1.4"/>
<circle cx="507.1" cy="489.0" r="4.0" fill="#4d0fd3" stroke="#fff" stroke-width="1.4"/>
<circle cx="513.4" cy="470.1" r="4.0" fill="#4d0fd3" stroke="#fff" stroke-width="1.4"/>
<circle cx="518.0" cy="478.2" r="4.0" fill="#4d0fd3" stroke="#fff" stroke-width="1.4"/>
<circle cx="523.8" cy="461.7" r="4.0" fill="#4d0fd3" stroke="#fff" stroke-width="1.4"/>
<circle cx="528.7" cy="457.5" r="4.0" fill="#4d0fd3" stroke="#fff" stroke-width="1.4"/>
<circle cx="534.9" cy="441.7" r="4.0" fill="#4d0fd3" stroke="#fff" stroke-width="1.4"/>
<circle cx="539.5" cy="440.7" r="4.0" fill="#4d0fd3" stroke="#fff" stroke-width="1.4"/>
<circle cx="545.8" cy="445.1" r="4.0" fill="#4d0fd3" stroke="#fff" stroke-width="1.4"/>
<circle cx="550.8" cy="486.2" r="4.0" fill="#4d0fd3" stroke="#fff" stroke-width="1.4"/>
<circle cx="556.4" cy="506.9" r="4.0" fill="#4d0fd3" stroke="#fff" stroke-width="1.4"/>
<circle cx="561.2" cy="445.9" r="4.0" fill="#4d0fd3" stroke="#fff" stroke-width="1.4"/>
<circle cx="567.0" cy="447.2" r="4.0" fill="#4d0fd3" stroke="#fff" stroke-width="1.4"/>
<circle cx="572.1" cy="447.2" r="4.0" fill="#4d0fd3" stroke="#fff" stroke-width="1.4"/>
<circle cx="578.2" cy="452.0" r="4.0" fill="#4d0fd3" stroke="#fff" stroke-width="1.4"/>
<circle cx="583.0" cy="451.7" r="4.0" fill="#4d0fd3" stroke="#fff" stroke-width="1.4"/>
<circle cx="589.1" cy="425.9" r="4.0" fill="#4d0fd3" stroke="#fff" stroke-width="1.4"/>
<circle cx="594.0" cy="461.3" r="4.0" fill="#4d0fd3" stroke="#fff" stroke-width="1.4"/>
<circle cx="600.0" cy="477.6" r="4.0" fill="#4d0fd3" stroke="#fff" stroke-width="1.4"/>
<circle cx="605.2" cy="436.8" r="4.0" fill="#4d0fd3" stroke="#fff" stroke-width="1.4"/>
<circle cx="611.0" cy="414.1" r="4.0" fill="#4d0fd3" stroke="#fff" stroke-width="1.4"/>
<circle cx="615.5" cy="435.2" r="4.0" fill="#4d0fd3" stroke="#fff" stroke-width="1.4"/>
<circle cx="622.0" cy="405.3" r="4.0" fill="#4d0fd3" stroke="#fff" stroke-width="1.4"/>
<circle cx="626.5" cy="422.4" r="4.0" fill="#4d0fd3" stroke="#fff" stroke-width="1.4"/>
<circle cx="632.6" cy="412.0" r="4.0" fill="#4d0fd3" stroke="#fff" stroke-width="1.4"/>
<circle cx="637.5" cy="468.5" r="4.0" fill="#4d0fd3" stroke="#fff" stroke-width="1.4"/>
<circle cx="643.6" cy="458.4" r="4.0" fill="#4d0fd3" stroke="#fff" stroke-width="1.4"/>
<circle cx="648.1" cy="480.3" r="4.0" fill="#4d0fd3" stroke="#fff" stroke-width="1.4"/>
<circle cx="654.5" cy="379.0" r="4.0" fill="#4d0fd3" stroke="#fff" stroke-width="1.4"/>
<circle cx="659.2" cy="362.6" r="4.0" fill="#4d0fd3" stroke="#fff" stroke-width="1.4"/>
<circle cx="665.3" cy="547.3" r="4.0" fill="#4d0fd3" stroke="#fff" stroke-width="1.4"/>
<circle cx="670.2" cy="404.0" r="4.0" fill="#4d0fd3" stroke="#fff" stroke-width="1.4"/>
<circle cx="676.5" cy="377.6" r="4.0" fill="#4d0fd3" stroke="#fff" stroke-width="1.4"/>
<circle cx="681.0" cy="516.7" r="4.0" fill="#4d0fd3" stroke="#fff" stroke-width="1.4"/>
<circle cx="687.2" cy="390.8" r="4.0" fill="#4d0fd3" stroke="#fff" stroke-width="1.4"/>
<circle cx="691.9" cy="438.9" r="4.0" fill="#4d0fd3" stroke="#fff" stroke-width="1.4"/>
<circle cx="697.8" cy="307.0" r="4.0" fill="#4d0fd3" stroke="#fff" stroke-width="1.4"/>
<circle cx="702.8" cy="525.4" r="4.0" fill="#4d0fd3" stroke="#fff" stroke-width="1.4"/>
<circle cx="708.8" cy="320.8" r="4.0" fill="#4d0fd3" stroke="#fff" stroke-width="1.4"/>
<circle cx="713.8" cy="419.6" r="4.0" fill="#4d0fd3" stroke="#fff" stroke-width="1.4"/>
<circle cx="719.5" cy="325.1" r="4.0" fill="#4d0fd3" stroke="#fff" stroke-width="1.4"/>
<circle cx="724.5" cy="480.3" r="4.0" fill="#4d0fd3" stroke="#fff" stroke-width="1.4"/>
<circle cx="730.6" cy="327.0" r="4.0" fill="#4d0fd3" stroke="#fff" stroke-width="1.4"/>
<circle cx="735.2" cy="321.7" r="4.0" fill="#4d0fd3" stroke="#fff" stroke-width="1.4"/>
<circle cx="741.1" cy="311.5" r="4.0" fill="#4d0fd3" stroke="#fff" stroke-width="1.4"/>
<circle cx="746.2" cy="309.2" r="4.0" fill="#4d0fd3" stroke="#fff" stroke-width="1.4"/>
<circle cx="752.5" cy="336.3" r="4.0" fill="#4d0fd3" stroke="#fff" stroke-width="1.4"/>
<circle cx="756.9" cy="316.7" r="4.0" fill="#4d0fd3" stroke="#fff" stroke-width="1.4"/>
<circle cx="763.0" cy="507.9" r="4.0" fill="#4d0fd3" stroke="#fff" stroke-width="1.4"/>
<circle cx="767.7" cy="309.0" r="4.0" fill="#4d0fd3" stroke="#fff" stroke-width="1.4"/>
<circle cx="773.7" cy="332.6" r="4.0" fill="#4d0fd3" stroke="#fff" stroke-width="1.4"/>
<circle cx="778.8" cy="423.5" r="4.0" fill="#4d0fd3" stroke="#fff" stroke-width="1.4"/>
<circle cx="784.9" cy="394.0" r="4.0" fill="#4d0fd3" stroke="#fff" stroke-width="1.4"/>
<circle cx="789.5" cy="352.5" r="4.0" fill="#4d0fd3" stroke="#fff" stroke-width="1.4"/>
<circle cx="795.4" cy="423.5" r="4.0" fill="#4d0fd3" stroke="#fff" stroke-width="1.4"/>
<circle cx="800.5" cy="322.3" r="4.0" fill="#4d0fd3" stroke="#fff" stroke-width="1.4"/>
<circle cx="806.8" cy="303.1" r="4.0" fill="#4d0fd3" stroke="#fff" stroke-width="1.4"/>
<circle cx="811.2" cy="321.7" r="4.0" fill="#4d0fd3" stroke="#fff" stroke-width="1.4"/>
<circle cx="817.1" cy="414.5" r="4.0" fill="#4d0fd3" stroke="#fff" stroke-width="1.4"/>
<circle cx="822.2" cy="374.6" r="4.0" fill="#4d0fd3" stroke="#fff" stroke-width="1.4"/>
<circle cx="828.4" cy="323.3" r="4.0" fill="#4d0fd3" stroke="#fff" stroke-width="1.4"/>
<circle cx="833.1" cy="304.6" r="4.0" fill="#4d0fd3" stroke="#fff" stroke-width="1.4"/>
<circle cx="838.9" cy="383.0" r="4.0" fill="#4d0fd3" stroke="#fff" stroke-width="1.4"/>
<circle cx="843.9" cy="299.0" r="4.0" fill="#4d0fd3" stroke="#fff" stroke-width="1.4"/>
<circle cx="850.1" cy="299.4" r="4.0" fill="#4d0fd3" stroke="#fff" stroke-width="1.4"/>
<circle cx="854.7" cy="310.2" r="4.0" fill="#4d0fd3" stroke="#fff" stroke-width="1.4"/>
<circle cx="860.7" cy="351.3" r="4.0" fill="#4d0fd3" stroke="#fff" stroke-width="1.4"/>
<circle cx="866.0" cy="342.9" r="4.0" fill="#4d0fd3" stroke="#fff" stroke-width="1.4"/>
<circle cx="871.9" cy="299.4" r="4.0" fill="#4d0fd3" stroke="#fff" stroke-width="1.4"/>
<circle cx="876.6" cy="303.1" r="4.0" fill="#4d0fd3" stroke="#fff" stroke-width="1.4"/>
<circle cx="883.1" cy="296.8" r="4.0" fill="#4d0fd3" stroke="#fff" stroke-width="1.4"/>
<circle cx="887.8" cy="344.4" r="4.0" fill="#4d0fd3" stroke="#fff" stroke-width="1.4"/>
<circle cx="92.3" cy="284.1" r="8.9" fill="#e3262f"/>
<text x="92.4" y="287.1" text-anchor="middle" font-size="10.2" font-weight="bold" fill="#fff">2</text>
<circle cx="138.8" cy="284.1" r="8.9" fill="#e9e9e9"/>
<path d="M136.0,283.5 h5.6 M138.8,281 v5" stroke="#1a1a1a" stroke-width="1.3"/>
<circle cx="186.9" cy="284.1" r="8.9" fill="#e3262f"/>
<path d="M186.03,279.8 h2.3 v7.3 h-2.3 v-4.6 l-1.6,1.1 v-2 z" fill="#fff"/>
<circle cx="235.0" cy="284.1" r="8.9" fill="#e9e9e9"/>
<path d="M232.2,283.5 h5.6 M235.0,281 v5" stroke="#1a1a1a" stroke-width="1.3"/>
<circle cx="281.6" cy="284.1" r="8.9" fill="#e9e9e9"/>
<path d="M278.8,283.5 h5.6 M281.6,281 v5" stroke="#1a1a1a" stroke-width="1.3"/>
<circle cx="329.7" cy="284.1" r="8.9" fill="#e9e9e9"/>
<path d="M326.9,283.5 h5.6 M329.7,281 v5" stroke="#1a1a1a" stroke-width="1.3"/>
<circle cx="376.3" cy="284.1" r="8.9" fill="#e9e9e9"/>
<path d="M373.5,283.5 h5.6 M376.3,281 v5" stroke="#1a1a1a" stroke-width="1.3"/>
<circle cx="424.4" cy="284.1" r="8.9" fill="#e9e9e9"/>
<path d="M421.6,283.5 h5.6 M424.4,281 v5" stroke="#1a1a1a" stroke-width="1.3"/>
<circle cx="472.5" cy="284.1" r="8.9" fill="#e9e9e9"/>
<path d="M469.7,283.5 h5.6 M472.5,281 v5" stroke="#1a1a1a" stroke-width="1.3"/>
<circle cx="517.5" cy="284.1" r="8.9" fill="#e3262f"/>
<path d="M516.60,279.8 h2.3 v7.3 h-2.3 v-4.6 l-1.6,1.1 v-2 z" fill="#fff"/>
<circle cx="565.6" cy="284.1" r="8.9" fill="#e9e9e9"/>
<path d="M562.8,283.5 h5.6 M565.6,281 v5" stroke="#1a1a1a" stroke-width="1.3"/>
<circle cx="612.2" cy="284.1" r="8.9" fill="#e9e9e9"/>
<path d="M609.4,283.5 h5.6 M612.2,281 v5" stroke="#1a1a1a" stroke-width="1.3"/>
<circle cx="660.3" cy="284.1" r="8.9" fill="#e9e9e9"/>
<path d="M657.5,283.5 h5.6 M660.3,281 v5" stroke="#1a1a1a" stroke-width="1.3"/>
<circle cx="706.8" cy="284.1" r="8.9" fill="#e9e9e9"/>
<path d="M704.0,283.5 h5.6 M706.8,281 v5" stroke="#1a1a1a" stroke-width="1.3"/>
<circle cx="755.0" cy="284.1" r="8.9" fill="#e9e9e9"/>
<path d="M752.2,283.5 h5.6 M755.0,281 v5" stroke="#1a1a1a" stroke-width="1.3"/>
<circle cx="803.1" cy="284.1" r="8.9" fill="#e9e9e9"/>
<path d="M800.3,283.5 h5.6 M803.1,281 v5" stroke="#1a1a1a" stroke-width="1.3"/>
<circle cx="849.6" cy="284.1" r="8.9" fill="#e9e9e9"/>
<path d="M846.8,283.5 h5.6 M849.6,281 v5" stroke="#1a1a1a" stroke-width="1.3"/>
</svg>
</body></html>
